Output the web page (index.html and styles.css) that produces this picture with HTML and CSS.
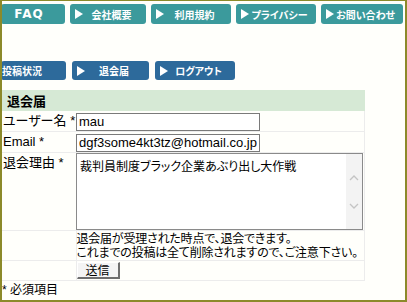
FILE: index.html
```html
<!DOCTYPE html>
<html lang="ja">
<head>
    <meta charset="UTF-8">
    <title>退会届</title>
    <link rel="stylesheet" href="styles.css">
</head>
<body>
<div class="page">

    <!-- 上部メニュー -->
    <div class="topnav">
        <a class="navbtn faq">FAQ</a>
        <a class="navbtn"><span class="tri"></span><span class="label">会社概要</span></a>
        <a class="navbtn"><span class="tri"></span><span class="label">利用規約</span></a>
        <a class="navbtn"><span class="tri"></span><span class="label">プライバシー</span></a>
        <a class="navbtn"><span class="tri"></span><span class="label">お問い合わせ</span></a>
    </div>

    <!-- 会員メニュー -->
    <div class="subnav">
        <a class="navbtn plain">投稿状況</a>
        <a class="navbtn"><span class="tri"></span><span class="label">退会届</span></a>
        <a class="navbtn"><span class="tri"></span><span class="label">ログアウト</span></a>
    </div>

    <form class="taikai">
        <table>
            <tr class="head">
                <th colspan="2">退会届</th>
            </tr>
            <tr class="row">
                <td class="key">ユーザー名 *</td>
                <td><input type="text" class="field" value="mau"></td>
            </tr>
            <tr class="row">
                <td class="key">Email *</td>
                <td><input type="text" class="field" value="dgf3some4kt3tz@hotmail.co.jp"></td>
            </tr>
            <tr class="row tall">
                <td class="key">退会理由 *</td>
                <td>
                    <div class="reasonbox">
                        <textarea class="reason">裁判員制度ブラック企業あぶり出し大作戦</textarea>
                        <div class="scrollbar">
                            <svg width="10" height="6" viewBox="0 0 10 6"><path d="M1 5 L5 1 L9 5" fill="none" stroke="#c4c4c4" stroke-width="1.3"/></svg>
                            <svg width="10" height="6" viewBox="0 0 10 6"><path d="M1 1 L5 5 L9 1" fill="none" stroke="#c4c4c4" stroke-width="1.3"/></svg>
                        </div>
                    </div>
                </td>
            </tr>
            <tr class="row note">
                <td></td>
                <td>退会届が受理された時点で、退会できます。<br>これまでの投稿は全て削除されますので、ご注意下さい。</td>
            </tr>
            <tr class="row send">
                <td></td>
                <td><button type="button" class="submit">送信</button></td>
            </tr>
        </table>
    </form>

    <p class="required">* 必須項目</p>

</div>
</body>
</html>
```

FILE: styles.css
```css
html, body {
    margin: 0;
    padding: 0;
}
body {
    font-family: "Liberation Sans", "Noto Sans CJK JP", sans-serif;
    font-size: 13px;
    color: #000;
    font-feature-settings: "palt";
}
.page {
    box-sizing: border-box;
    width: 407px;
    height: 302px;
    background: #fffffb;
    border-top: 1px solid #8c8a2a;
    border-left: 2px solid #8c8a2a;
    border-right: 2px solid #8c8a2a;
    border-bottom: 2px solid #8c8a2a;
    overflow: hidden;
}

/* メニュー */
.topnav, .subnav {
    display: grid;
    grid-template-columns: 64px 76px 80px 80px 82px;
    column-gap: 5px;
    margin-left: -1px;
}
.topnav {
    margin-top: 3px;
    height: 20px;
}
.subnav {
    margin-top: 37px;
    height: 19px;
    grid-template-columns: 65px 77px 80px;
    column-gap: 6px;
}
.navbtn {
    display: flex;
    align-items: center;
    padding-left: 5px;
    background-color: #3b9a9c;
    color: #fff;
    font-family: "Noto Sans CJK JP", sans-serif;
    font-weight: bold;
    font-size: 10px;
    border-radius: 3px;
    text-decoration: none;
    white-space: nowrap;
}
.subnav .navbtn {
    background-color: #2d6a9b;
}
.navbtn.faq {
    justify-content: center;
    padding: 0 8px 0 0;
    font-family: "DejaVu Sans", sans-serif;
    font-size: 12px;
    letter-spacing: 1px;
}
.navbtn.plain {
    padding-left: 1px;
}
.tri {
    width: 0;
    height: 0;
    border-top: 5px solid transparent;
    border-bottom: 5px solid transparent;
    border-left: 8px solid #fff;
}
.label {
    flex: 1;
    text-align: center;
    padding-right: 6px;
}

/* フォーム */
.taikai {
    margin: 10px 0 0 0;
}
table {
    width: 363px;
    border-collapse: collapse;
}
th, td {
    padding: 0;
    text-align: left;
    vertical-align: middle;
}
.head th {
    height: 21px;
    background-color: #d6e9d5;
    padding-left: 5px;
    font-family: "Noto Sans CJK JP", sans-serif;
    font-size: 13px;
    font-weight: bold;
}
.row td {
    border-bottom: 1px solid #ececec;
    border-right: 1px solid #ececec;
    height: 20px;
}
.row td.key {
    width: 73px;
    padding-left: 1px;
    border-right: none;
    vertical-align: top;
    line-height: 19px;
}
.field {
    box-sizing: border-box;
    width: 184px;
    height: 18px;
    margin: 1px 0 0 0;
    padding: 0 2px;
    border: 1px solid #7a7a7a;
    font-family: "Liberation Sans", sans-serif;
    font-size: 13px;
    background: #fff;
}
.tall td {
    height: 77px;
}
.reasonbox {
    display: flex;
    box-sizing: border-box;
    width: 287px;
    height: 77px;
    border: 1px solid #8a8a8a;
    background: #fff;
}
.reason {
    flex: 1;
    box-sizing: border-box;
    height: 100%;
    margin: 0;
    padding: 3px 3px;
    border: none;
    outline: none;
    font-family: "Noto Sans CJK JP", sans-serif;
    font-size: 12px;
    font-feature-settings: "palt";
    resize: none;
    overflow: hidden;
    background: transparent;
}
.scrollbar {
    width: 16px;
    background-color: #f3f3f3;
    display: flex;
    flex-direction: column;
    align-items: center;
    justify-content: center;
    gap: 22px;
}
.note td {
    height: 29px;
    font-size: 12px;
    line-height: 14px;
    letter-spacing: -0.2px;
}
.send td {
    height: 19px;
}
.submit {
    display: block;
    box-sizing: border-box;
    width: 43px;
    height: 17px;
    margin: 1px 0;
    padding: 0;
    background-color: #f4f4f4;
    border-top: 1px solid #fff;
    border-left: 1px solid #fff;
    border-right: 2px solid #6e6e6e;
    border-bottom: 2px solid #6e6e6e;
    font-family: "Noto Sans CJK JP", sans-serif;
    font-size: 12px;
    line-height: 14px;
}
.required {
    margin: 2px 0 0 0;
    font-size: 12px;
    line-height: 14px;
}
```
